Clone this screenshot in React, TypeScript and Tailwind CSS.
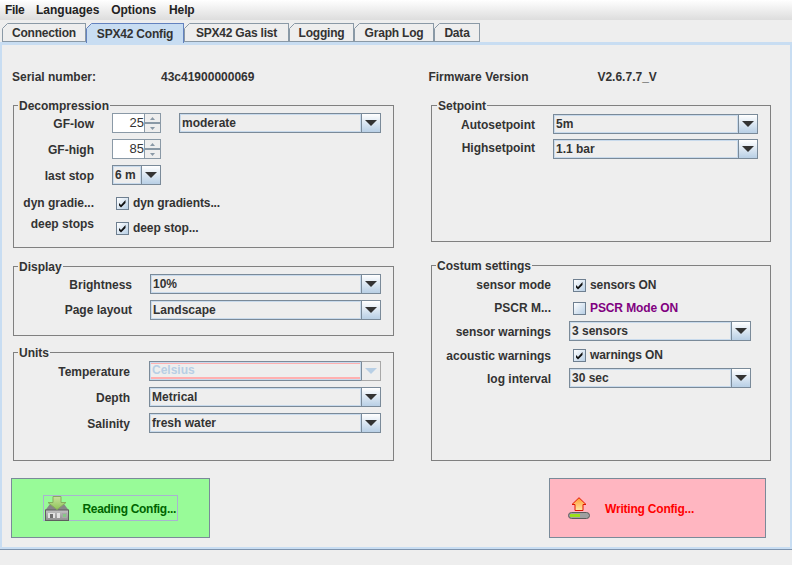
import type { ReactNode } from 'react';

const FONT = "font-['Liberation_Sans',Arial,sans-serif]";

function Caret({ disabled }: { disabled?: boolean }) {
  return (
    <svg width="12" height="6" viewBox="0 0 12 6" className="block">
      <path d="M0 0H12L6 6Z" fill={disabled ? '#b8cfe5' : '#333333'} />
    </svg>
  );
}

function Combo({ value, className, disabled }: { value: string; className: string; disabled?: boolean }) {
  return (
    <div className={`flex h-5 bg-[#eeeeee] ${className}`}>
      <div className="flex min-w-0 flex-1 border border-r-0 border-[#7a8a99]">
        <div className="flex min-w-0 flex-1 border border-[#c8daec]">
          {disabled ? (
            <div className="flex flex-1 items-center border-t border-b-2 border-[#ffb0b0] pl-[1px] text-[#b8cfe5]">{value}</div>
          ) : (
            <div className="flex flex-1 items-center pl-[1px]">{value}</div>
          )}
        </div>
      </div>
      {disabled ? (
        <div className="flex w-[20px] items-center justify-center border border-[#a8a8a8] border-l-[#7a8a99] bg-[#eeeeee]">
          <Caret disabled />
        </div>
      ) : (
        <div className="flex w-[20px] items-center justify-center border border-[#7a8a99] bg-gradient-to-b from-[#ffffff] to-[#b8cfe5]">
          <Caret />
        </div>
      )}
    </div>
  );
}

function Spinner({ value }: { value: string }) {
  return (
    <div className="flex h-5 w-[49px] border border-[#8a99a6] bg-white">
      <div className="flex flex-1 items-center justify-end text-[13px] font-normal">{value}</div>
      <div className="flex w-4 flex-col border-l border-[#8a99a6] bg-[#eeeeee]">
        <div className="flex flex-1 items-center justify-center">
          <svg width="5" height="3" viewBox="0 0 5 3"><path d="M0 3H5L2.5 0Z" fill="#8a99a6" /></svg>
        </div>
        <div className="flex flex-1 items-center justify-center border-t-2 border-[#8a99a6]">
          <svg width="5" height="3" viewBox="0 0 5 3"><path d="M0 0H5L2.5 3Z" fill="#8a99a6" /></svg>
        </div>
      </div>
    </div>
  );
}

function Check({ label, checked = true, className = '' }: { label: string; checked?: boolean; className?: string }) {
  return (
    <div className={`flex items-center gap-[4px] tracking-[-0.1px] ${className}`}>
      <div className="flex h-[13px] w-[13px] items-center justify-center border border-[#6e7f90] bg-gradient-to-br from-[#ffffff] to-[#b8cfe5]">
        {checked && (
          <svg width="9" height="9" viewBox="0 0 9 9">
            <path d="M1 4L3 6L7.5 1V4L3 8.5L1 6.5Z" fill="#111111" />
          </svg>
        )}
      </div>
      <span>{label}</span>
    </div>
  );
}

function Group({ title, className, titleClass = 'left-[4px]', children }: { title: string; className: string; titleClass?: string; children: ReactNode }) {
  return (
    <div className={`relative border border-[#808080] ${className}`}>
      <span className={`absolute -top-[7px] bg-[#eeeeee] px-[1px] leading-[14px] ${titleClass}`}>{title}</span>
      {children}
    </div>
  );
}

function Row({ label, labelClass, className = '', children }: { label: string; labelClass: string; className?: string; children: ReactNode }) {
  return (
    <div className={`flex items-center ${className}`}>
      <div className={`shrink-0 text-right ${labelClass}`}>{label}</div>
      {children}
    </div>
  );
}

function ReadIcon() {
  return (
    <svg width="24" height="25" viewBox="0 0 24 25" className="block">
      <defs>
        <linearGradient id="arrowGreen" x1="0" y1="0" x2="0" y2="1">
          <stop offset="0" stopColor="#c8e29c" />
          <stop offset="1" stopColor="#8fc45a" />
        </linearGradient>
        <linearGradient id="trayGray" x1="0" y1="0" x2="0" y2="1">
          <stop offset="0" stopColor="#c4c4c4" />
          <stop offset="1" stopColor="#8e8e8e" />
        </linearGradient>
      </defs>
      <path d="M0.5 14L5 8H19L23.5 14Z" fill="#868686" />
      <rect x="0.5" y="14" width="23" height="10.5" fill="url(#trayGray)" stroke="#5e5e5e" />
      <rect x="3" y="17" width="7" height="5" fill="#e2e2e2" />
      <rect x="5" y="18" width="3" height="4" fill="#707070" />
      <rect x="12" y="17" width="3" height="5" fill="#e2e2e2" />
      <rect x="17" y="17" width="5" height="5" fill="#a8a8a8" />
      <rect x="18" y="18" width="3" height="3" fill="#86c886" />
      <path d="M8 0.5H16V6.5H21L12 13.5L3 6.5H8Z" fill="url(#arrowGreen)" stroke="#86ad5e" />
    </svg>
  );
}

function WriteIcon() {
  return (
    <svg width="22" height="22" viewBox="0 0 22 22" className="block">
      <defs>
        <linearGradient id="arrowOrange" x1="0" y1="0" x2="0" y2="1">
          <stop offset="0" stopColor="#ff9a2e" />
          <stop offset="1" stopColor="#ffe6a8" />
        </linearGradient>
      </defs>
      <path d="M11 0.7L18 7.5H15V13.5H7V7.5H4Z" fill="url(#arrowOrange)" stroke="#e01400" />
      <rect x="0.5" y="15.5" width="21" height="6" rx="3" fill="#a0a0a0" stroke="#5c5c5c" />
      <rect x="2" y="17" width="10" height="3" fill="#9be01a" />
    </svg>
  );
}

function TabCorner({ active }: { active?: boolean }) {
  return (
    <svg width="6" height="6" viewBox="0 0 6 6" className="absolute -left-px -top-px block">
      <path d="M0 0H6L0 6Z" fill="#eeeeee" />
      <path d="M0.5 5.5L5.5 0.5" stroke={active ? '#6382bf' : '#8a99a6'} fill="none" />
    </svg>
  );
}

const TABS = [
  { label: 'Connection', w: 'w-[84px]' },
  { label: 'SPX42 Config', w: 'w-[98px]', active: true },
  { label: 'SPX42 Gas list', w: 'w-[105px]' },
  { label: 'Logging', w: 'w-[65px]' },
  { label: 'Graph Log', w: 'w-[80px]' },
  { label: 'Data', w: 'w-[46px]' },
];

export default function App() {
  return (
    <div className={`flex h-[565px] w-[792px] flex-col overflow-hidden bg-[#eeeeee] text-[12px] font-bold text-[#333333] ${FONT}`}>
      {/* Menu bar */}
      <div className="flex h-[20px] items-center gap-[12px] bg-gradient-to-b from-[#ffffff] to-[#dddddd] pl-[5px] text-[#222222]">
        <span className="w-[19px] tracking-[-0.3px]">File</span>
        <span>Languages</span>
        <span className="tracking-[-0.1px]">Options</span>
        <span className="ml-[1px] tracking-[-0.1px]">Help</span>
      </div>

      {/* Tabs */}
      <div className="flex h-[22px] items-end pl-[2px] tracking-[-0.2px]">
        {TABS.map((t) => (
          <div
            key={t.label}
            className={`relative flex items-center justify-center border ${t.w} ${
              t.active ? 'z-10 -mb-px h-[20px] border-b-0 border-[#6382bf] bg-[#c8ddf2] pt-[1px]' : 'h-[19px] border-[#8a99a6] bg-[#eeeeee] pt-[1px]'
            }`}
          >
            <TabCorner active={t.active} />
            {t.label}
          </div>
        ))}
      </div>

      {/* Tab panel */}
      <div className="flex h-[507px] flex-col border-x-[2px] border-t-[3px] border-b-[2px] border-[#c8ddf2] pb-[9px]">
        <div className="flex h-[60px] items-end pb-[19px]">
          <span className="ml-[10px] w-[149px]">Serial number:</span>
          <span>43c41900000069</span>
          <span className="ml-[174px] w-[169px]">Firmware Version</span>
          <span>V2.6.7.7_V</span>
        </div>

        <div className="flex flex-1 pl-[11px]">
          {/* Left column */}
          <div className="flex w-[381px] flex-col">
            <Group title="Decompression" className="h-[143px]">
              <div className="flex flex-col pt-[7px]">
                <Row label="GF-low" labelClass="w-[80px] pt-[2px]" className="gap-[18px]">
                  <Spinner value="25" />
                  <Combo value="moderate" className="w-[202px]" />
                </Row>
                <Row label="GF-high" labelClass="w-[80px] pt-[2px]" className="mt-[6px] gap-[18px]">
                  <Spinner value="85" />
                </Row>
                <Row label="last stop" labelClass="w-[80px] pt-[2px]" className="mt-[6px] gap-[18px]">
                  <Combo value="6 m" className="w-[49px]" />
                </Row>
                <Row label="dyn gradie..." labelClass="w-[80px]" className="mt-[9px] gap-[22px]">
                  <Check label="dyn gradients..." />
                </Row>
                <Row label="deep stops" labelClass="w-[80px] -mt-[8px]" className="mt-[7px] gap-[22px]">
                  <Check label="deep stop..." />
                </Row>
              </div>
            </Group>
            <Group title="Display" className="mt-[18px] h-[70px]">
              <div className="flex flex-col gap-[6px] pt-[7px]">
                <Row label="Brightness" labelClass="w-[118px] pt-[1px]" className="gap-[18px]">
                  <Combo value="10%" className="w-[231px]" />
                </Row>
                <Row label="Page layout" labelClass="w-[118px]" className="gap-[18px]">
                  <Combo value="Landscape" className="w-[231px]" />
                </Row>
              </div>
            </Group>
            <Group title="Units" className="mt-[16px] h-[109px]">
              <div className="flex flex-col gap-[6px] pt-[7px]">
                <Row label="Temperature" labelClass="w-[116px] pt-[3px]" className="gap-[19px]">
                  <Combo value="Celsius" className="w-[232px]" disabled />
                </Row>
                <Row label="Depth" labelClass="w-[116px] pt-[1px]" className="gap-[19px]">
                  <Combo value="Metrical" className="w-[232px]" />
                </Row>
                <Row label="Salinity" labelClass="w-[116px] pt-[2px]" className="gap-[19px]">
                  <Combo value="fresh water" className="w-[232px]" />
                </Row>
              </div>
            </Group>
          </div>

          {/* Right column */}
          <div className="ml-[37px] flex w-[340px] flex-col">
            <Group title="Setpoint" titleClass="left-[5px]" className="h-[137px]">
              <div className="flex flex-col gap-[5px] pt-[7px]">
                <Row label="Autosetpoint" labelClass="w-[103px] pt-[3px]" className="gap-[18px]">
                  <Combo value="5m" className="w-[205px]" />
                </Row>
                <Row label="Highsetpoint" labelClass="w-[103px] -mt-[2px]" className="gap-[18px]">
                  <Combo value="1.1 bar" className="w-[205px]" />
                </Row>
              </div>
            </Group>
            <Group title="Costum settings" className="mt-[23px] h-[196px]">
              <div className="flex flex-col pt-[9px]">
                <Row label="sensor mode" labelClass="w-[119px]" className="h-[20px] gap-[22px]">
                  <Check label="sensors ON" />
                </Row>
                <Row label="PSCR M..." labelClass="w-[119px]" className="mt-[3px] h-[20px] gap-[22px]">
                  <Check label="PSCR Mode ON" checked={false} className="text-[#800080]" />
                </Row>
                <Row label="sensor warnings" labelClass="w-[119px] pt-[2px]" className="mt-[3px] gap-[18px]">
                  <Combo value="3 sensors" className="w-[182px]" />
                </Row>
                <Row label="acoustic warnings" labelClass="w-[119px] pt-[2px]" className="mt-[4px] h-[20px] gap-[22px]">
                  <Check label="warnings ON" />
                </Row>
                <Row label="log interval" labelClass="w-[119px] pt-[2px]" className="mt-[3px] gap-[18px]">
                  <Combo value="30 sec" className="w-[182px]" />
                </Row>
              </div>
            </Group>
          </div>
        </div>

        {/* Action buttons */}
        <div className="flex h-[60px] pl-[9px]">
          <div className="flex h-full w-[199px] items-center border border-[#7a8a99] bg-[#98fb98] pl-[31px] tracking-[-0.3px] text-[#006400]">
            <div className="flex h-[26px] w-[135px] items-center justify-between border border-[#a8b4d0] pr-[1px] pl-[1px]">
              <ReadIcon />
              <span className="pt-[2px]">Reading Config...</span>
            </div>
          </div>
          <div className="ml-[339px] flex h-full w-[217px] items-center gap-[15px] border border-[#7a8a99] bg-[#ffb6c1] pl-[18px] tracking-[-0.2px] text-[#ff0000]">
            <WriteIcon />
            <span className="pt-[2px]">Writing Config...</span>
          </div>
        </div>
      </div>

      {/* Status bar */}
      <div className="flex-1 border-t-[1px] border-[#7f94ad]" />
    </div>
  );
}
